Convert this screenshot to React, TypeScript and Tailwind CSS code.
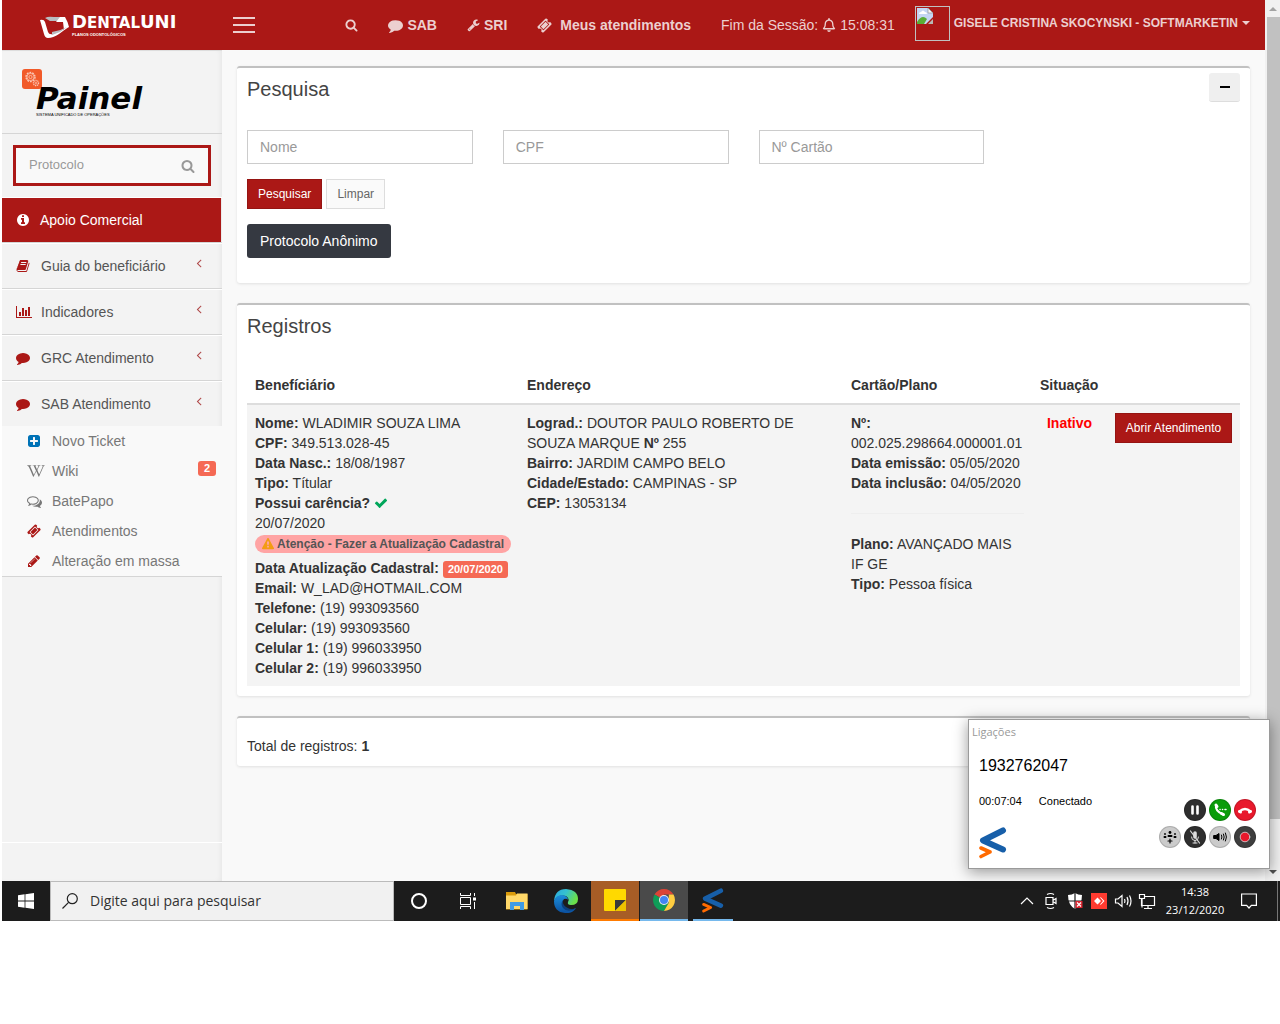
import type { ReactNode } from 'react';
import { FaRegBell, FaWikipediaW } from 'react-icons/fa';

const paths = {
  search:
    'M1216 832q0-185-131.5-316.5t-316.5-131.5-316.5 131.5-131.5 316.5 131.5 316.5 316.5 131.5 316.5-131.5 131.5-316.5zm512 832q0 52-38 90t-90 38q-54 0-90-38l-343-342q-179 124-399 124-143 0-273.5-55.5t-225-150-150-225-55.5-273.5 55.5-273.5 150-225 225-150 273.5-55.5 273.5 55.5 225 150 150 225 55.5 273.5q0 220-124 399l343 343q37 37 37 90z',
  comment:
    'M1792 896q0 174-120 321.5t-326 233-450 85.5q-70 0-145-8-198 175-460 242-49 14-114 22-17 2-30.5-9t-17.5-29v-1q-3-4-.5-12t2-10 4.5-9.5l6-9 7-8.5 8-9q7-8 31-34.5t34.5-38 31-39.5 32.5-51 27-59 26-76q-157-89-247.5-220t-90.5-281q0-130 71-248.5t191-204.5 286-136.5 348-50.5q244 0 450 85.5t326 233 120 321.5z',
  wrench:
    'M448 1472q0-26-19-45t-45-19-45 19-19 45 19 45 45 19 45-19 19-45zm644-420l-682 682q-37 37-90 37-52 0-91-37l-106-108q-38-36-38-90 0-53 38-91l681-681q39 98 114.5 173.5t173.5 114.5zm634-435q0 39-23 106-47 134-164.5 217.5t-258.5 83.5q-185 0-316.5-131.5t-131.5-316.5 131.5-316.5 316.5-131.5q58 0 121.5 16.5t107.5 46.5q16 11 16 28t-16 28l-293 169v224l193 107q5-3 79-48.5t135.5-81 70.5-35.5q15 0 23.5 10t8.5 25z',
  ticket:
    'M1024 452l316 316-572 572-316-316zm-211 979l618-618q19-19 19-45t-19-45l-362-362q-18-18-45-18t-45 18l-618 618q-19 19-19 45t19 45l362 362q18 18 45 18t45-18zm889-637l-907 908q-37 37-90.5 37t-90.5-37l-126-126q56-56 56-136t-56-136-136-56-136 56l-125-126q-37-37-37-90.5t37-90.5l907-906q37-37 90.5-37t90.5 37l125 125q-56 56-56 136t56 136 136 56 136-56l126 125q37 37 37 90.5t-37 90.5z',
  info:
    'M1152 1376v-160q0-14-9-23t-23-9h-96v-512q0-14-9-23t-23-9h-320q-14 0-23 9t-9 23v160q0 14 9 23t23 9h96v320h-96q-14 0-23 9t-9 23v160q0 14 9 23t23 9h448q14 0 23-9t9-23zm-128-896v-160q0-14-9-23t-23-9h-192q-14 0-23 9t-9 23v160q0 14 9 23t23 9h192q14 0 23-9t9-23zm640 416q0 209-103 385.5t-279.5 279.5-385.5 103-385.5-103-279.5-279.5-103-385.5 103-385.5 279.5-279.5 385.5-103 385.5 103 279.5 279.5 103 385.5z',
  book:
    'M1703 478q40 57 18 129l-275 906q-19 64-76.5 107.5t-122.5 43.5h-923q-77 0-148.5-53.5t-99.5-131.5q-24-67-2-127 0-4 3-27t4-37q1-8-3-21.5t-3-19.5q2-11 8-21t16.5-23.5 16.5-23.5q23-38 45-91.5t30-91.5q3-10 .5-30t-.5-28q3-11 17-28t17-23q21-36 42-92t25-90q1-9-2.5-32t.5-28q4-13 22-30.5t22-22.5q19-26 42.5-84.5t27.5-96.5q1-8-3-25.5t-2-26.5q2-8 9-18t18-23 17-21q8-12 16.5-30.5t15-35 16-36 19.5-32 26.5-23.5 36-11.5 47.5 5.5l-1 3q38-9 51-9h761q74 0 114 56t18 130l-274 906q-36 119-71.5 153.5t-128.5 34.5h-869q-27 0-38 15-11 16-1 43 24 70 144 70h923q29 0 56-15.5t35-41.5l300-987q7-22 5-57 38 15 59 43zm-1064 2q-4 13 2 22.5t20 9.5h608q13 0 25.5-9.5t16.5-22.5l21-64q4-13-2-22.5t-20-9.5h-608q-13 0-25.5 9.5t-16.5 22.5zm-83 256q-4 13 2 22.5t20 9.5h608q13 0 25.5-9.5t16.5-22.5l21-64q4-13-2-22.5t-20-9.5h-608q-13 0-25.5 9.5t-16.5 22.5z',
  chart:
    'M640 896v512h-256v-512h256zm384-512v1024h-256v-1024h256zm1024 1152v128h-2048v-1536h128v1408h1920zm-640-896v768h-256v-768h256zm384-384v1152h-256v-1152h256z',
  plus:
    'M1408 960v-128q0-26-19-45t-45-19h-320v-320q0-26-19-45t-45-19h-128q-26 0-45 19t-19 45v320h-320q-26 0-45 19t-19 45v128q0 26 19 45t45 19h320v320q0 26 19 45t45 19h128q26 0 45-19t19-45v-320h320q26 0 45-19t19-45zm256-544v960q0 119-84.5 203.5t-203.5 84.5h-960q-119 0-203.5-84.5t-84.5-203.5v-960q0-119 84.5-203.5t203.5-84.5h960q119 0 203.5 84.5t84.5 203.5z',
  comments:
    'M704 384q-153 0-286 52t-211.5 141-78.5 191q0 82 53 158t149 132l97 56-35 84q34-20 62-39l44-31 53 10q78 14 153 14 153 0 286-52t211.5-141 78.5-191-78.5-191-211.5-141-286-52zm0-128q191 0 353.5 68.5t256.5 186.5 94 257-94 257-256.5 186.5-353.5 68.5q-86 0-176-16-124 88-278 128-36 9-86 16h-3q-11 0-20.5-8t-11.5-21q-1-3-1-6.5t.5-6.5 2-6l2.5-5 3.5-5.5 4-5 4.5-5 4-4.5q5-6 23-25t26-29.5 22.5-29 25-38.5 20.5-44q-124-72-195-177t-71-224q0-139 94-257t256.5-186.5 353.5-68.5zm822 1169q10 24 20.5 44t25 38.5 22.5 29 26 29.5 23 25q1 1 4 4.5t4.5 5 4 5 3.5 5.5l2.5 5 2 6 .5 6.5-1 6.5q-3 14-13 22t-22 7q-50-7-86-16-154-40-278-128-90 16-176 16-271 0-472-132 58 4 88 4 161 0 309-45t264-129q125-92 192-212t67-254q0-77-23-152 129 71 204 178t75 230q0 120-71 224.5t-195 176.5z',
  pencil:
    'M491 1536l91-91-235-235-91 91v107h128v128h107zm523-928q0-22-22-22-10 0-17 7l-542 542q-7 7-7 17 0 22 22 22 10 0 17-7l542-542q7-7 7-17zm-54-192l416 416-832 832h-416v-416zm683 96q0 53-37 90l-166 166-416-416 166-165q36-38 90-38 53 0 91 38l235 234q37 39 37 91z',
  check:
    'M1671 566q0 40-28 68l-724 724-136 136q-28 28-68 28t-68-28l-136-136-362-362q-28-28-28-68t28-68l136-136q28-28 68-28t68 28l294 295 656-657q28-28 68-28t68 28l136 136q28 28 28 68z',
  warning:
    'M1024 1375v-190q0-14-9.5-23.5t-22.5-9.5h-192q-13 0-22.5 9.5t-9.5 23.5v190q0 14 9.5 23.5t22.5 9.5h192q13 0 22.5-9.5t9.5-23.5zm-2-374l18-459q0-12-10-19-13-11-24-11h-220q-11 0-24 11-10 7-10 21l17 457q0 10 10 16.5t24 6.5h185q14 0 23.5-6.5t10.5-16.5zm-14-934l768 1408q35 63-2 126-17 29-46.5 46t-63.5 17h-1536q-34 0-63.5-17t-46.5-46q-37-63-2-126l768-1408q17-31 47-49t65-18 65 18 47 49z',
  angleLeft:
    'M1203 544q0 13-10 23l-393 393 393 393q10 10 10 23t-10 23l-50 50q-10 10-23 10t-23-10l-466-466q-10-10-10-23t10-23l466-466q10-10 23-10t23 10l50 50q10 10 10 23z',
};

type IconName = keyof typeof paths;

function Icon({ name, className }: { name: IconName; className?: string }) {
  return (
    <svg
      viewBox={name === 'chart' ? '0 0 2048 1792' : '0 0 1792 1792'}
      fill="currentColor"
      className={className}
      aria-hidden="true"
    >
      <path d={paths[name]} />
    </svg>
  );
}

function TopBar() {
  const link = 'flex h-full items-center px-[15px]';

  return (
    <header className="flex h-[50px] bg-[#ab1816] text-sm text-[#eccfcf]">
      <a href="#" aria-label="DentalUni" className="flex w-[220px] shrink-0 items-center gap-[3px] pl-[38px] text-white">
        <svg viewBox="0 0 29 22" className="mt-1 h-[22px] w-[29px]" aria-hidden="true">
          <path d="M0 4q4-1 5 2l3 10q1 3 5 2l14-6-8 6q-6 4-11 4-3 0-4-4z" fill="#fff" />
          <path d="M5 2q3-2 9-1h8l-2 4H10z" fill="#b9bcc0" />
          <path d="M20 1h5q3 5 4 10l-5 3-1-8h-7z" fill="#fff" />
          <path d="M12 16q8-1 15-5l-7 5-8 3z" fill="#b9bcc0" />
        </svg>
        <div className="font-['DejaVu_Sans'] leading-none">
          <p className="flex items-baseline text-[18px] font-bold leading-[17px]">
            D<span className="text-[15px]">ENTAL</span>UNI
          </p>
          <p className="font-['Liberation_Sans'] text-[4px] font-bold leading-[5px]">PLANOS ODONTOLÓGICOS</p>
        </div>
      </a>
      <button aria-label="Menu" className="flex w-11 flex-col justify-center gap-[5px] pl-[11px]">
        <span className="h-0.5 w-[22px] bg-[#eccfcf]" />
        <span className="h-0.5 w-[22px] bg-[#eccfcf]" />
        <span className="h-0.5 w-[22px] bg-[#eccfcf]" />
      </button>
      <nav className="ml-auto flex items-center font-bold whitespace-nowrap">
        <a href="#" aria-label="Pesquisar" className={link}>
          <Icon name="search" className="h-[14px] w-[13px]" />
        </a>
        <a href="#" className={`${link} gap-1`}>
          <Icon name="comment" className="size-[15px]" />
          SAB
        </a>
        <a href="#" className={`${link} gap-1`}>
          <Icon name="wrench" className="h-[14px] w-[13px]" />
          SRI
        </a>
        <a href="#" className={`${link} gap-2`}>
          <Icon name="ticket" className="size-[15px]" />
          Meus atendimentos
        </a>
        <span className={`${link} gap-1 font-normal`}>
          Fim da Sessão: <FaRegBell className="size-[14px]" /> 15:08:31
        </span>
        <a href="#" className="flex h-full items-start gap-1 pt-[6px] pr-[15px] pl-[5px] text-xs">
          <span role="img" aria-label="Foto" className="block size-[35px] border border-[#c0c0c0] p-px">
            <svg viewBox="0 0 16 16" className="size-4">
              <path d="M0 0h11l5 5v4L9 16H0z" fill="#c5d5f3" />
              <path d="M0 14q5-8 10-3l-3 5H0z" fill="#5aad35" />
              <path d="M2 6q0-2 2-2 2-3 4 0 2 0 2 2z" fill="#fff" />
              <path d="M11 0v5h5z" fill="#f4f4f4" stroke="#8a8a8a" strokeWidth=".6" />
              <path d="M16 11v5h-5z" fill="#b7b9b4" />
            </svg>
          </span>
          <span className="pt-[9px]">GISELE CRISTINA SKOCYNSKI - SOFTMARKETIN</span>
          <span className="mt-[15px] border-x-4 border-t-4 border-x-transparent" />
        </a>
      </nav>
    </header>
  );
}

const menu: { icon: IconName; label: string }[] = [
  { icon: 'book', label: 'Guia do beneficiário' },
  { icon: 'chart', label: 'Indicadores' },
  { icon: 'comment', label: 'GRC Atendimento' },
  { icon: 'comment', label: 'SAB Atendimento' },
];

const submenu: { icon: ReactNode; label: string; badge?: number }[] = [
  { icon: <Icon name="plus" className="size-[14px] text-[#0073b7]" />, label: 'Novo Ticket' },
  { icon: <FaWikipediaW className="h-[16px] w-[18px] shrink-0" />, label: 'Wiki', badge: 2 },
  { icon: <Icon name="comments" className="size-[15px]" />, label: 'BatePapo' },
  { icon: <Icon name="ticket" className="size-[14px] text-[#ab1816]" />, label: 'Atendimentos' },
  { icon: <Icon name="pencil" className="size-[14px] text-[#ab1816]" />, label: 'Alteração em massa' },
];

function Sidebar() {
  return (
    <aside className="flex w-[220px] shrink-0 flex-col bg-[#f3f3f3] text-sm shadow-[inset_-3px_0_6px_-3px_rgba(0,0,0,0.08)]">
      <div className="flex h-[84px] border-y border-t-[#ddd] border-b-[#d5d5d5] pt-[18px] pl-5">
        <span className="flex size-5 items-center justify-center rounded-[3px] bg-[#f15a29]">
          <svg viewBox="0 0 16 16" fill="none" stroke="#fbc9b8" className="size-4" aria-hidden="true">
            <circle cx="6.5" cy="6" r="4.5" strokeWidth="1.4" strokeDasharray="1.8 1" />
            <circle cx="6.5" cy="6" r="3.6" strokeWidth=".8" />
            <circle cx="6.5" cy="6" r="1.6" strokeWidth=".8" />
            <circle cx="12" cy="12" r="2.6" strokeWidth="1.2" strokeDasharray="1.2 .7" />
            <circle cx="12" cy="12" r="1" strokeWidth=".7" />
          </svg>
        </span>
        <div className="-ml-[6px] pt-[14px] text-black">
          <p className="font-['DejaVu_Sans'] text-[31px] leading-[30px] font-bold italic">Painel</p>
          <p className="text-[4px] leading-[4px]">SISTEMA UNIFICADO DE OPERAÇÕES</p>
        </div>
      </div>

      <form className="m-[11px] flex h-[41px] items-center border-[3px] border-[#ab1816] bg-[#f9f9f9] px-[13px]">
        <input
          aria-label="Protocolo"
          placeholder="Protocolo"
          className="min-w-0 flex-1 bg-transparent text-[13px] outline-none placeholder:text-[#999]"
        />
        <button type="button" aria-label="Buscar protocolo">
          <Icon name="search" className="size-[14px] text-[#999]" />
        </button>
      </form>

      <ul className="text-[#555]">
        <li className="border-y border-t-white border-b-[#d5d5d5]">
          <a href="#" className="mr-px flex h-11 items-center gap-[10px] bg-[#ab1816] pl-[14px] text-white">
            <Icon name="info" className="size-[14px]" />
            Apoio Comercial
          </a>
        </li>
        {menu.map((item, index) => (
          <li key={index} className="border-t border-b border-t-white border-b-[#d5d5d5] last:border-b-0">
            <a href="#" className="flex h-11 items-center pl-[14px]">
              <span className="w-[25px] text-[#ab1816]">
                <Icon name={item.icon} className={item.icon === 'chart' ? 'h-[14px] w-4' : 'size-[14px]'} />
              </span>
              {item.label}
              <Icon name="angleLeft" className="mr-4 mb-[6px] ml-auto size-[14px] text-[#b04a4a]" />
            </a>
          </li>
        ))}
      </ul>

      <ul className="border-b border-[#d5d5d5] bg-[#f9f9f9] text-[#777]">
        {submenu.map((item, index) => (
          <li key={index}>
            <a href="#" className="flex h-[30px] items-center pr-[6px] pl-[25px]">
              <span className="flex w-[25px] shrink-0">{item.icon}</span>
              {item.label}
              {item.badge && (
                <span className="mb-[6px] ml-auto rounded-[3px] bg-[#f56954] px-[6px] text-[11px] leading-[15px] font-bold text-white">
                  {item.badge}
                </span>
              )}
            </a>
          </li>
        ))}
      </ul>
      <div className="mt-auto h-[39px] border-t border-white" />
    </aside>
  );
}

function Box({ children }: { children: ReactNode }) {
  return (
    <section className="mb-5 rounded-[3px] border-t-2 border-[#c1c1c1] bg-white px-[10px] shadow-[0_1px_3px_rgba(0,0,0,0.1)]">
      {children}
    </section>
  );
}

function SearchBox() {
  return (
    <Box>
      <div className="flex items-start justify-between pt-[5px] pb-7">
        <h3 className="pt-1 text-xl leading-[24px] text-[#444]">Pesquisa</h3>
        <button aria-label="Recolher" className="flex h-[29px] w-[31px] items-center justify-center rounded-[3px] border-b border-[#ddd] bg-[#efefef]">
          <span className="h-0.5 w-[10px] bg-black" />
        </button>
      </div>
      <form className="pb-[25px]">
        <div className="grid grid-cols-4 gap-x-[30px]">
          {['Nome', 'CPF', 'Nº Cartão'].map((field) => (
            <input
              key={field}
              aria-label={field}
              placeholder={field}
              className="h-[34px] w-full border border-[#ccc] px-3 text-sm outline-none placeholder:text-[#999]"
            />
          ))}
        </div>
        <div className="flex gap-1 py-[15px] text-xs">
          <button type="button" className="h-[30px] border border-[#951412] bg-[#ab1816] px-[10px] text-white">
            Pesquisar
          </button>
          <button type="button" className="h-[30px] border border-[#ddd] bg-[#fafafa] px-[10px] text-[#666]">
            Limpar
          </button>
        </div>
        <button type="button" className="h-[34px] rounded-[3px] bg-[#353941] px-[13px] text-sm text-white">
          Protocolo Anônimo
        </button>
      </form>
    </Box>
  );
}

function Field({ label, value }: { label: string; value: string }) {
  return (
    <p>
      <b>{label}</b> {value}
    </p>
  );
}

function RecordsBox() {
  return (
    <Box>
      <h3 className="pt-[9px] pb-[29px] text-xl leading-[24px] text-[#444]">Registros</h3>
      <div className="pb-[10px]">
        <table className="w-full table-fixed text-left text-sm text-[#333]">
          <colgroup>
            <col />
            <col className="w-[324px]" />
            <col className="w-[189px]" />
            <col className="w-[75px]" />
            <col className="w-[133px]" />
          </colgroup>
          <thead>
            <tr className="border-b-2 border-[#ddd]">
              <th className="p-2">Benefíciário</th>
              <th className="p-2">Endereço</th>
              <th className="p-2">Cartão/Plano</th>
              <th className="p-2">Situação</th>
              <th className="p-2" aria-label="Ações" />
            </tr>
          </thead>
          <tbody>
            <tr className="bg-[#f4f4f4] align-top">
              <td className="p-2 whitespace-nowrap">
                <Field label="Nome:" value="WLADIMIR SOUZA LIMA" />
                <Field label="CPF:" value="349.513.028-45" />
                <Field label="Data Nasc.:" value="18/08/1987" />
                <Field label="Tipo:" value="Títular" />
                <p className="flex items-center gap-1">
                  <b>Possui carência?</b>
                  <Icon name="check" className="size-[14px] text-[#00a65a]" />
                </p>
                <p>20/07/2020</p>
                <div className="flex h-[25px] items-start pt-0.5">
                  <span className="flex h-[18px] items-center gap-[3px] rounded-full bg-[#ffa4a4] px-[7px] text-xs font-bold text-[#555]">
                    <Icon name="warning" className="size-[12px] text-[#f39c12]" />
                    Atenção - Fazer a Atualização Cadastral
                  </span>
                </div>
                <p className="flex h-5 items-center gap-1">
                  <b>Data Atualização Cadastral:</b>
                  <span className="mt-0.5 rounded-[3px] bg-[#f56954] px-[5px] text-[11px] leading-[17px] font-bold text-white">
                    20/07/2020
                  </span>
                </p>
                <Field label="Email:" value="W_LAD@HOTMAIL.COM" />
                <Field label="Telefone:" value="(19) 993093560" />
                <Field label="Celular:" value="(19) 993093560" />
                <Field label="Celular 1:" value="(19) 996033950" />
                <Field label="Celular 2:" value="(19) 996033950" />
              </td>
              <td className="p-2">
                <p>
                  <b>Lograd.:</b> DOUTOR PAULO ROBERTO DE SOUZA MARQUE <b>Nº</b> 255
                </p>
                <Field label="Bairro:" value="JARDIM CAMPO BELO" />
                <Field label="Cidade/Estado:" value="CAMPINAS - SP" />
                <Field label="CEP:" value="13053134" />
              </td>
              <td className="p-2">
                <Field label="Nº:" value="002.025.298664.000001.01" />
                <Field label="Data emissão:" value="05/05/2020" />
                <Field label="Data inclusão:" value="04/05/2020" />
                <hr className="my-5 border-[#eee]" />
                <Field label="Plano:" value="AVANÇADO MAIS IF GE" />
                <Field label="Tipo:" value="Pessoa física" />
              </td>
              <td className="p-2 text-center font-bold text-[#f00]">Inativo</td>
              <td className="p-2">
                <button className="block h-[30px] w-full border border-[#951412] bg-[#ab1816] text-xs whitespace-nowrap text-white">
                  Abrir Atendimento
                </button>
              </td>
            </tr>
          </tbody>
        </table>
      </div>
    </Box>
  );
}

function BrandMark({ className }: { className?: string }) {
  return (
    <svg viewBox="0 0 28 32" fill="none" strokeLinecap="round" strokeLinejoin="round" className={className} aria-hidden="true">
      <path d="M24 3.5L4 13.500 24 22.500" stroke="#175fa9" strokeWidth="6" />
      <path d="M2 21L11 25 2 29.500" stroke="#ff6a00" strokeWidth="3.600" />
    </svg>
  );
}

function RoundButton({ label, tone, children }: { label: string; tone: string; children: ReactNode }) {
  return (
    <button
      aria-label={label}
      className={`flex size-[22px] items-center justify-center rounded-full border border-black/15 ${tone}`}
    >
      <svg viewBox="0 0 20 20" className="size-5" fill="none" stroke="currentColor" strokeLinecap="round">
        {children}
      </svg>
    </button>
  );
}

function CallWindow() {
  return (
    <div className="absolute right-[10px] bottom-3 flex h-[150px] w-[302px] flex-col border border-[#9a9a9a] bg-white text-black shadow-[0_3px_14px_rgba(0,0,0,0.4)]">
      <h4 className="pt-1 pl-[3px] font-['Open_Sans'] text-[11px] leading-[16px] text-[#999]">Ligações</h4>
      <p className="pt-[14px] pl-[10px] text-base leading-[24px]">1932762047</p>
      <p className="flex gap-[17px] pt-[15px] pl-[10px] text-[11px] leading-[16px]">
        <span>00:07:04</span>
        <span>Conectado</span>
      </p>
      <div className="mt-auto flex items-end justify-between pr-[13px] pb-[9px] pl-[10px]">
        <BrandMark className="h-8 w-7" />
        <div className="-mt-3 flex flex-col items-end gap-[5px] pb-[11px]">
          <div className="flex gap-[3px]">
            <RoundButton label="Pausar" tone="bg-[#2e2e2e] text-white">
              <path d="M7.500 6.500v7M12.500 6.500v7" strokeWidth="2.600" />
            </RoundButton>
            <RoundButton label="Transferir" tone="bg-[#0a9c0a] text-white">
              <path d="M6 5q-1 6 7 9.500" strokeWidth="2.200" />
              <path d="M6 5l1 1.500M11.500 13.500l2 1" strokeWidth="3" />
              <path d="M10 9.500h.1M12.500 9.500h.1M15 9.500h1" strokeWidth="1.500" />
            </RoundButton>
            <RoundButton label="Desligar" tone="bg-[#e8192c] text-white">
              <path d="M4.500 11.500q5.500-5 11 0" strokeWidth="2.400" />
              <path d="M4.500 11.500l1 .5M15.500 11.500l-1 .5" strokeWidth="3" />
            </RoundButton>
          </div>
          <div className="flex gap-[3px]">
            <RoundButton label="Conferência" tone="bg-[#cbcbcb] text-black">
              <circle cx="10" cy="5.500" r="1.400" fill="currentColor" stroke="none" />
              <path d="M8.500 9h3M4.500 10h1M14.500 10h1" strokeWidth="2" />
              <path d="M5 7v.1M15 7v.1" strokeWidth="1.800" />
              <path d="M10 12v4M8 14h4" strokeWidth="1.200" />
            </RoundButton>
            <RoundButton label="Mudo" tone="bg-[#2e2e2e] text-[#ddd]">
              <path d="M10 6v4" strokeWidth="3.600" />
              <path d="M6.500 10q0 3.500 3.500 3.500t3.500-3.500M10 13.500v2.500M8 16h4" />
              <path d="M5.500 4l9 12" strokeWidth="1.200" />
            </RoundButton>
            <RoundButton label="Volume" tone="bg-[#cbcbcb] text-black">
              <path d="M4 8.500h2l3-2v7l-3-2H4z" fill="currentColor" />
              <path d="M11.500 8q1 2 0 4M13.500 7q1.500 3 0 6M15.500 6q2 4 0 8" />
            </RoundButton>
            <RoundButton label="Gravar" tone="bg-[#3e3e3e] text-[#ddd]">
              <circle cx="10" cy="10" r="4.800" fill="#e8192c" strokeWidth=".8" />
            </RoundButton>
          </div>
        </div>
      </div>
    </div>
  );
}

function ScrollBar() {
  return (
    <div className="flex w-[15px] shrink-0 flex-col items-center bg-[#f1f1f1]" aria-hidden="true">
      <span className="mt-[7px] border-x-4 border-b-4 border-x-transparent border-b-[#a3a3a3]" />
      <span className="mt-[6px] ml-auto w-[13px] flex-1 bg-[#c1c1c1]" />
      <span className="mt-[51px] mb-[7px] border-x-4 border-t-4 border-x-transparent border-t-[#505050]" />
    </div>
  );
}

function TaskBar() {
  const app = 'flex h-10 w-12 items-center justify-center';

  return (
    <footer className="flex h-10 items-center bg-[#1c1c1c] font-['Open_Sans'] text-white">
      <button aria-label="Iniciar" className={app}>
        <svg viewBox="0 0 16 16" fill="#fff" className="size-4">
          <path d="M0 2.200L6.600 1.300V7.600H0zM7.400 1.200L16 0v7.600H7.400zM0 8.400h6.600v6.300L0 13.800zM7.400 8.400H16V16l-8.600-1.200z" />
        </svg>
      </button>
      <div className="flex h-10 w-[344px] items-center gap-3 border border-[#bbb] bg-[#f1f1f1] pl-[11px] text-[#333]">
        <svg viewBox="0 0 16 16" fill="none" stroke="#222" strokeWidth="1.200" className="size-4" aria-hidden="true">
          <circle cx="10.300" cy="5.700" r="5" />
          <path d="M6.600 9.400L.5 15.500" />
        </svg>
        <input
          aria-label="Digite aqui para pesquisar"
          placeholder="Digite aqui para pesquisar"
          className="min-w-0 flex-1 bg-transparent text-sm outline-none placeholder:text-[#333]"
        />
      </div>
      <div className="flex gap-px pl-px">
        <button aria-label="Cortana" className={app}>
          <span className="size-4 rounded-full border-2 border-white" />
        </button>
        <button aria-label="Visão de tarefas" className={app}>
          <svg viewBox="0 0 16 16" fill="none" stroke="#fff" className="size-4">
            <path d="M.5 0v2.500h10V0M.5 16v-2.500h10V16M.5 4.500h10v7H.5zM14.500 0v3M14.500 9v7" />
            <path d="M13 4.500h3v3h-3z" fill="#fff" stroke="none" />
          </svg>
        </button>
        <button aria-label="Explorador de arquivos" className={app}>
          <svg viewBox="0 0 22 18" className="h-[18px] w-[22px]">
            <path d="M0 0h9l1 2h11.500v15.500H0z" fill="#d99a0b" />
            <path d="M0 3.500h10L11 1.500h10.500v15.500H0z" fill="#ffd869" />
            <path d="M4 10h14v8h-4v-4H8v4H4z" fill="#3f9be4" />
          </svg>
        </button>
        <button aria-label="Edge" className={app}>
          <svg viewBox="0 0 24 24" className="size-6">
            <defs>
              <linearGradient id="edge-top" x1="0" y1="0" x2="1" y2=".4">
                <stop offset="0" stopColor="#2aa8e0" />
                <stop offset=".5" stopColor="#35c1d0" />
                <stop offset="1" stopColor="#6be04a" />
              </linearGradient>
              <linearGradient id="edge-low" x1="0" y1="0" x2="0" y2="1">
                <stop offset="0" stopColor="#1b8fdd" />
                <stop offset="1" stopColor="#0b4f9e" />
              </linearGradient>
            </defs>
            <path d="M0 12Q1 0 12 0q12 1 12 10 0 6-7 6-4 0-3-3 2-3-2-6Q4 5 0 12z" fill="url(#edge-top)" />
            <path d="M0 12q2-6 8-6 6 1 6 5-1-2-4-1-3 3 0 8 4 5 12 1-4 6-11 5Q0 23 0 12z" fill="url(#edge-low)" />
            <path d="M9 11q-3 4 0 8 4 5 13 1-6 1-10-2-4-3-3-7z" fill="#0c3f7d" />
          </svg>
        </button>
        <button aria-label="Notas" className={`${app} border-b-2 border-[#ff7b00] bg-[#a75d26]`}>
          <svg viewBox="0 0 22 22" className="size-[22px]">
            <path d="M0 1q0-1 1-1h20q1 0 1 1v20q0 1-1 1H1q-1 0-1-1z" fill="#ffd900" />
            <path d="M11 11h11L11 22z" fill="#3a3a3a" />
            <path d="M22 11v10q0 1-1 1H11z" fill="#eec200" />
          </svg>
        </button>
        <button aria-label="Chrome" className={`${app} border-b-2 border-[#76b9ed] bg-[#4a4a4a]`}>
          <svg viewBox="0 0 22 22" className="size-[22px]">
            <path d="M11 11L1.500 5.500A11 11 0 0 1 20.500 5.500H11z" fill="#db4437" />
            <path d="M11 11L1.500 5.500A11 11 0 0 0 11 22l4.800-8.200z" fill="#0f9d58" />
            <path d="M20.500 5.500A11 11 0 0 1 11 22l4.800-8.200V5.500z" fill="#ffcd40" />
            <circle cx="11" cy="11" r="5" fill="#f1f1f1" />
            <circle cx="11" cy="11" r="4" fill="#4285f4" />
          </svg>
        </button>
        <button aria-label="Softphone" className={app}>
          <span className="flex h-10 w-10 justify-center border-b-2 border-[#76b9ed] pt-[7px]">
            <BrandMark className="h-[25px] w-[22px]" />
          </span>
        </button>
      </div>
      <div className="ml-auto flex items-center">
        <svg viewBox="0 0 144 24" fill="none" stroke="#fff" strokeWidth="1.200" className="mr-px h-6 w-36" aria-hidden="true">
          <path d="M6 15l6-6 6 6" />
          <path d="M31 8.500h7v7h-7zM38.500 11l2.500-1.500v5L38.500 13M32 5.500q3.500-2 7 0M32 18.500q3.500 2 7 0" />
          <path d="M60 4q3 2 7 2 0 10-7 14-7-4-7-14 4 0 7-2z" fill="#fff" stroke="none" />
          <path d="M60 4v16M53 12h14" stroke="#1c1c1c" />
          <path d="M60.500 12h7v7h-7z" fill="#d9232e" stroke="none" />
          <path d="M62 13.500l4 4M66 13.500l-4 4" />
          <path d="M76 4h16v16H76z" fill="#ff3b30" stroke="none" />
          <path d="M79 12l3.500-3.500L86 12l-3.500 3.500zM85 8.500l.8-.3L89.500 12l-3.700 3.800-.8-.3L88 12z" fill="#fff" stroke="none" />
          <path d="M100.500 10h2.500l4-3.500v11L103 14h-2.500zM109.500 10q1 2 0 4M112 8q2 4 0 8M114.500 6.500q3 5.500 0 11" />
          <path d="M126.500 7.500h13v9h-13zM133 16.500v3M129 19.500h8" />
          <path d="M124.500 5.500h5v4h-5zM127 9.500v9" fill="#1c1c1c" />
        </svg>
        <p className="w-[70px] text-center text-[11px] leading-[18px]">
          14:38
          <br />
          23/12/2020
        </p>
        <button aria-label="Notificações" className="flex w-[38px] justify-center">
          <svg viewBox="0 0 16 16" fill="none" stroke="#fff" strokeWidth="1.200" className="size-4">
            <path d="M.6 1h14.800v11.400h-5L8 15l-2.400-2.600h-5z" />
          </svg>
        </button>
        <span className="mr-[2px] ml-[9px] h-10 w-px bg-[#777]" />
      </div>
    </footer>
  );
}

export default function App() {
  return (
    <div className="min-h-screen bg-white pl-0.5 font-['Liberation_Sans',sans-serif]">
      <div className="relative flex">
        <div className="min-w-0 flex-1">
          <TopBar />
          <div className="flex min-h-[831px]">
            <Sidebar />
            <main className="min-w-0 flex-1 bg-[#f9f9f9] px-[15px] pt-4">
              <SearchBox />
              <RecordsBox />
              <Box>
                <p className="pt-[18px] pb-[10px] text-sm text-[#333]">
                  Total de registros: <b>1</b>
                </p>
              </Box>
            </main>
          </div>
        </div>
        <ScrollBar />
        <CallWindow />
      </div>
      <TaskBar />
    </div>
  );
}
